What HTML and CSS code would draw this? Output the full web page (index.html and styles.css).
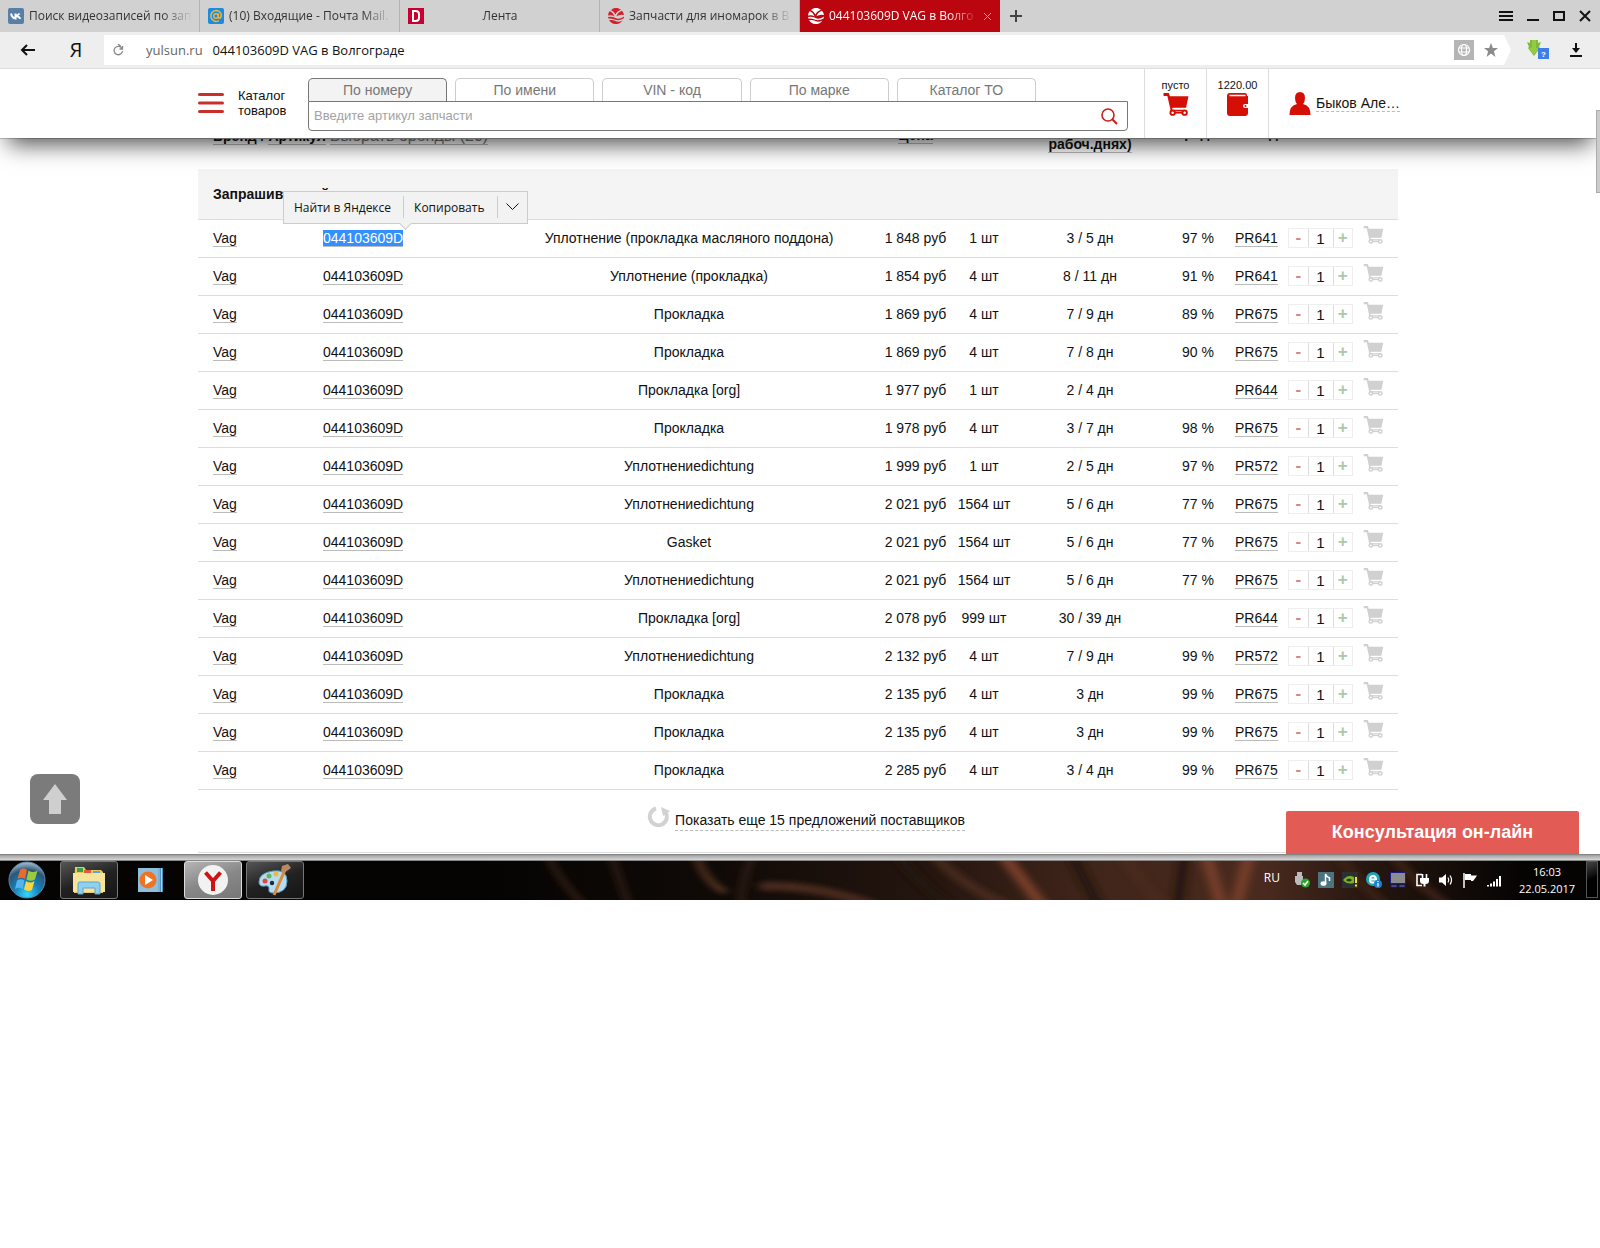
FILE: index.html
```html
<!DOCTYPE html>
<html lang="ru">
<head>
<meta charset="utf-8">
<meta name="viewport" content="width=device-width, initial-scale=1">
<title>044103609D VAG в Волгограде</title>
<link rel="stylesheet" href="styles.css">
</head>
<body>
<svg class="sprite" aria-hidden="true">
  <symbol id="cart" viewBox="0 0 26 24">
    <path d="M0 0h5.500l1.200 3.500H26l-2.500 12H9.500l-.8 2H21v1.500H7.500L7 16.500 4 3H0z"/>
    <g fill="none" stroke="currentColor" stroke-width="2"><circle cx="9.500" cy="20.500" r="2.300"/><circle cx="22" cy="20.500" r="2.300"/><path d="M11 20.500h9"/></g>
  </symbol>
  <symbol id="globe-logo" viewBox="0 0 16 16">
    <path d="M3 1.900A8 8 0 0 1 13 1.800Q8.500 3.500 7.600 6.500 5.500 3.300 3 1.900zM14 2.700A8 8 0 0 1 16 7Q11.500 6 8.500 8.300 9.500 4.600 14 2.700zM1.700 3A8 8 0 0 0 0 7.500Q4 6.500 6.800 8.500 5.500 4.800 1.700 3zM0 9q4-1 7.500 1.100T16 8.500l-.4 2Q11 13 7.300 11.700T.3 10.600zM1 12.200q3.500-.8 6.500.8t7-.5A8 8 0 0 1 1 12.200z"/>
  </symbol>
</svg>

<div class="tabstrip">
  <nav class="tabs" aria-label="Вкладки">
    <a class="tab" href="#">
      <svg class="fav" viewBox="0 0 16 16"><rect width="16" height="16" rx="2" fill="#5a7fa6"/><path d="M3 5.500q1 4.500 4.500 5V5.500M7.500 8q2.500-.5 4-2.500M8 8q3 .5 4.500 2.800" fill="none" stroke="#fff" stroke-width="2"/></svg>
      <span class="tab-text">Поиск видеозаписей по зап</span>
    </a>
    <a class="tab" href="#">
      <svg class="fav" viewBox="0 0 16 16"><rect width="16" height="16" rx="2" fill="#168de2"/><circle cx="8" cy="8" r="2.300" fill="none" stroke="#f3b23a" stroke-width="1.500"/><path d="M10.400 5.500v3.500q.3 1.500 1.700 1Q13.800 9 13 5.800 11.600 2.400 8 2.400A5.500 5.500 0 1 0 11 12.700" fill="none" stroke="#f3b23a" stroke-width="1.500"/></svg>
      <span class="tab-text">(10) Входящие - Почта Mail.</span>
    </a>
    <a class="tab" href="#">
      <svg class="fav" viewBox="0 0 16 16"><path fill="#c8002f" d="M0 0h16v16H0z"/><path d="M5 3h2.500q3.500 0 3.500 3v4q0 3-3.500 3H5z" fill="none" stroke="#fff" stroke-width="2"/></svg>
      <span class="tab-text centered">Лента</span>
    </a>
    <a class="tab" href="#">
      <svg class="fav red"><use href="#globe-logo"/></svg>
      <span class="tab-text">Запчасти для иномарок в В</span>
    </a>
    <a class="tab active" href="#" aria-current="page">
      <svg class="fav"><use href="#globe-logo"/></svg>
      <span class="tab-text">044103609D VAG в Волго</span>
      <svg class="tab-close" viewBox="0 0 9 9"><path d="M1 1l7 7M8 1L1 8" stroke="#e99" fill="none"/></svg>
    </a>
  </nav>
  <button class="icon-btn" aria-label="Новая вкладка"><svg width="12" height="12" viewBox="0 0 12 12"><path d="M6 0v12M0 6h12" stroke="#444" stroke-width="2"/></svg></button>
  <div class="window-controls">
    <button class="icon-btn" aria-label="Меню"><svg width="14" height="12" viewBox="0 0 14 12"><path d="M0 2h14M0 6h14M0 10h14" stroke="#111" stroke-width="2"/></svg></button>
    <button class="icon-btn" aria-label="Свернуть"><svg width="12" height="12" viewBox="0 0 12 12"><path d="M0 10h12" stroke="#111" stroke-width="2"/></svg></button>
    <button class="icon-btn" aria-label="Развернуть"><svg width="12" height="12" viewBox="0 0 12 12"><path d="M1 2h10v8H1z" stroke="#111" stroke-width="2" fill="none"/></svg></button>
    <button class="icon-btn" aria-label="Закрыть"><svg width="12" height="12" viewBox="0 0 12 12"><path d="M1 1l10 10M11 1L1 11" stroke="#111" stroke-width="2"/></svg></button>
  </div>
</div>

<div class="toolbar">
  <button class="icon-btn" aria-label="Назад"><svg width="16" height="12" viewBox="0 0 16 12"><path d="M15 6H2M7 1L2 6l5 5" stroke="#111" stroke-width="2" fill="none"/></svg></button>
  <a class="ya" href="#">Я</a>
  <div class="omnibox">
    <button class="icon-btn" aria-label="Обновить"><svg width="11" height="12" viewBox="0 0 11 12"><path d="M9 4.500A4.200 4.200 0 1 0 9.500 7M9.500 2v3H6.500M5 0l3 2.500" stroke="#888" stroke-width="1.300" fill="none"/></svg></button>
    <span class="host">yulsun.ru</span>
    <span class="title">044103609D VAG в Волгограде</span>
    <div class="omni-icons">
      <svg width="20" height="20" viewBox="0 0 20 20"><path fill="#b5b5b5" d="M0 0h20v20H0z"/><g fill="none" stroke="#fff" stroke-width="1.200"><circle cx="10" cy="10" r="5.500"/><ellipse cx="10" cy="10" rx="2.500" ry="5.500"/><path d="M5 8h10M5 12h10"/></g></svg>
      <svg width="14" height="14" viewBox="0 0 14 14"><path fill="#8b8b8b" d="M7 0l1.900 5H14l-4.100 3.200L11.400 14 7 10.500 2.600 14l1.500-5.800L0 5h5.100z"/></svg>
    </div>
  </div>
  <svg class="ext" width="24" height="20" viewBox="0 0 24 20"><path d="M1 2l3 1V0h8v3l3-1-2 5 1 1-6 8-6-8 1-1z" fill="#7fb83a"/><path d="M6 0h4v8h3l-5 7-5-7h3z" fill="#93cc43"/><rect x="12" y="8" width="11" height="11" fill="#3f7ee8"/><text x="15" y="17" class="ext-mark">?</text></svg>
  <button class="icon-btn" aria-label="Загрузки"><svg width="12" height="14" viewBox="0 0 12 14"><path d="M0 13h12M6 0v7" stroke="#111" stroke-width="2"/><path d="M2 5h8L6 10z" fill="#111"/></svg></button>
</div>

<div class="page">
  <header class="site-header">
    <div class="header-inner">
      <a class="catalog" href="#">
        <svg width="26" height="22" viewBox="0 0 26 22"><path d="M1.500 2.500h23M1.500 11h23M1.500 19.500h23" stroke="#c9302c" stroke-width="3" stroke-linecap="round"/></svg>
        <span>Каталог<br>товаров</span>
      </a>
      <form class="search">
        <div class="search-tabs">
          <button type="button" class="search-tab on">По номеру</button>
          <button type="button" class="search-tab">По имени</button>
          <button type="button" class="search-tab">VIN - код</button>
          <button type="button" class="search-tab">По марке</button>
          <button type="button" class="search-tab">Каталог ТО</button>
        </div>
        <div class="search-box">
          <input type="text" placeholder="Введите артикул запчасти" aria-label="Введите артикул запчасти">
          <button class="icon-btn" type="button" aria-label="Найти"><svg width="17" height="17" viewBox="0 0 17 17"><circle cx="7" cy="7" r="6" fill="none" stroke="#c9201a" stroke-width="1.600"/><path d="M11.300 11.300L16 16" stroke="#c9201a" stroke-width="2"/></svg></button>
        </div>
      </form>
      <a class="head-cell" href="#"><span>пусто</span><svg width="26" height="23"><use href="#cart"/></svg></a>
      <a class="head-cell" href="#"><span>1220.00</span><svg width="22" height="23" viewBox="0 0 22 23"><path d="M3 0h15q2 0 2 3h1v8h-3q-2 0-2 2t2 2h3v5q0 3-3 3H3q-3 0-3-3V3q0-3 3-3z"/><path d="M2.500 2.500h16" stroke="#fff" stroke-width="1.500"/><circle cx="18.500" cy="13" r="1"/></svg></a>
      <a class="user" href="#"><svg width="22" height="23" viewBox="0 0 22 23"><path d="M11 0q5 0 5 6 0 4-2 6 7.500 1.500 7.500 11h-21Q.5 13.500 8 12 6 10 6 6q0-6 5-6z"/></svg><span>Быков Але…</span></a>
    </div>
  </header>

  <main class="content">
    <table class="offers">
      <colgroup><col class="c-brand"><col class="c-art"><col><col class="c-price"><col class="c-qty"><col class="c-days"><col class="c-pct"><col class="c-pr"><col class="c-step"><col class="c-cart"></colgroup>
      <thead>
        <tr>
          <th class="left" colspan="3"><a class="ul" href="#">Бренд</a> / <a class="ul" href="#">Артикул</a> <a class="ul pick" href="#">Выбрать бренды (20)</a></th>
          <th><a class="ul" href="#">Цена</a></th>
          <th></th>
          <th><a class="ul" href="#">Срок (в<br>рабоч.днях)</a></th>
          <th class="plain">Средн.</th>
          <th class="plain supplier">Склад</th>
          <th></th><th></th>
        </tr>
      </thead>
      <tbody>
        <tr class="group"><th class="left" colspan="10">
          <div class="anchor">Запрашиваемый артикул
            <div class="popup"><button>Найти в Яндексе</button><button>Копировать</button><button aria-label="Ещё"><svg width="13" height="8" viewBox="0 0 13 8"><path d="M.5.500l6 6 6-6" fill="none" stroke="#111"/></svg></button></div>
          </div>
        </th></tr>
        <tr><td><a class="ul" href="#">Vag</a></td><td><a class="ul selected" href="#">044103609D</a></td><td>Уплотнение (прокладка масляного поддона)</td><td>1 848 руб</td><td>1 шт</td><td>3 / 5 дн</td><td>97 %</td><td><a class="ul" href="#">PR641</a></td><td><div class="stepper"><button class="minus">-</button><input value="1" aria-label="Количество"><button class="plus">+</button></div></td><td><button class="buy" aria-label="В корзину"><svg><use href="#cart"/></svg></button></td></tr>
        <tr><td><a class="ul" href="#">Vag</a></td><td><a class="ul" href="#">044103609D</a></td><td>Уплотнение (прокладка)</td><td>1 854 руб</td><td>4 шт</td><td>8 / 11 дн</td><td>91 %</td><td><a class="ul" href="#">PR641</a></td><td><div class="stepper"><button class="minus">-</button><input value="1" aria-label="Количество"><button class="plus">+</button></div></td><td><button class="buy" aria-label="В корзину"><svg><use href="#cart"/></svg></button></td></tr>
        <tr><td><a class="ul" href="#">Vag</a></td><td><a class="ul" href="#">044103609D</a></td><td>Прокладка</td><td>1 869 руб</td><td>4 шт</td><td>7 / 9 дн</td><td>89 %</td><td><a class="ul" href="#">PR675</a></td><td><div class="stepper"><button class="minus">-</button><input value="1" aria-label="Количество"><button class="plus">+</button></div></td><td><button class="buy" aria-label="В корзину"><svg><use href="#cart"/></svg></button></td></tr>
        <tr><td><a class="ul" href="#">Vag</a></td><td><a class="ul" href="#">044103609D</a></td><td>Прокладка</td><td>1 869 руб</td><td>4 шт</td><td>7 / 8 дн</td><td>90 %</td><td><a class="ul" href="#">PR675</a></td><td><div class="stepper"><button class="minus">-</button><input value="1" aria-label="Количество"><button class="plus">+</button></div></td><td><button class="buy" aria-label="В корзину"><svg><use href="#cart"/></svg></button></td></tr>
        <tr><td><a class="ul" href="#">Vag</a></td><td><a class="ul" href="#">044103609D</a></td><td>Прокладка [org]</td><td>1 977 руб</td><td>1 шт</td><td>2 / 4 дн</td><td></td><td><a class="ul" href="#">PR644</a></td><td><div class="stepper"><button class="minus">-</button><input value="1" aria-label="Количество"><button class="plus">+</button></div></td><td><button class="buy" aria-label="В корзину"><svg><use href="#cart"/></svg></button></td></tr>
        <tr><td><a class="ul" href="#">Vag</a></td><td><a class="ul" href="#">044103609D</a></td><td>Прокладка</td><td>1 978 руб</td><td>4 шт</td><td>3 / 7 дн</td><td>98 %</td><td><a class="ul" href="#">PR675</a></td><td><div class="stepper"><button class="minus">-</button><input value="1" aria-label="Количество"><button class="plus">+</button></div></td><td><button class="buy" aria-label="В корзину"><svg><use href="#cart"/></svg></button></td></tr>
        <tr><td><a class="ul" href="#">Vag</a></td><td><a class="ul" href="#">044103609D</a></td><td>Уплотнениеdichtung</td><td>1 999 руб</td><td>1 шт</td><td>2 / 5 дн</td><td>97 %</td><td><a class="ul" href="#">PR572</a></td><td><div class="stepper"><button class="minus">-</button><input value="1" aria-label="Количество"><button class="plus">+</button></div></td><td><button class="buy" aria-label="В корзину"><svg><use href="#cart"/></svg></button></td></tr>
        <tr><td><a class="ul" href="#">Vag</a></td><td><a class="ul" href="#">044103609D</a></td><td>Уплотнениеdichtung</td><td>2 021 руб</td><td>1564 шт</td><td>5 / 6 дн</td><td>77 %</td><td><a class="ul" href="#">PR675</a></td><td><div class="stepper"><button class="minus">-</button><input value="1" aria-label="Количество"><button class="plus">+</button></div></td><td><button class="buy" aria-label="В корзину"><svg><use href="#cart"/></svg></button></td></tr>
        <tr><td><a class="ul" href="#">Vag</a></td><td><a class="ul" href="#">044103609D</a></td><td>Gasket</td><td>2 021 руб</td><td>1564 шт</td><td>5 / 6 дн</td><td>77 %</td><td><a class="ul" href="#">PR675</a></td><td><div class="stepper"><button class="minus">-</button><input value="1" aria-label="Количество"><button class="plus">+</button></div></td><td><button class="buy" aria-label="В корзину"><svg><use href="#cart"/></svg></button></td></tr>
        <tr><td><a class="ul" href="#">Vag</a></td><td><a class="ul" href="#">044103609D</a></td><td>Уплотнениеdichtung</td><td>2 021 руб</td><td>1564 шт</td><td>5 / 6 дн</td><td>77 %</td><td><a class="ul" href="#">PR675</a></td><td><div class="stepper"><button class="minus">-</button><input value="1" aria-label="Количество"><button class="plus">+</button></div></td><td><button class="buy" aria-label="В корзину"><svg><use href="#cart"/></svg></button></td></tr>
        <tr><td><a class="ul" href="#">Vag</a></td><td><a class="ul" href="#">044103609D</a></td><td>Прокладка [org]</td><td>2 078 руб</td><td>999 шт</td><td>30 / 39 дн</td><td></td><td><a class="ul" href="#">PR644</a></td><td><div class="stepper"><button class="minus">-</button><input value="1" aria-label="Количество"><button class="plus">+</button></div></td><td><button class="buy" aria-label="В корзину"><svg><use href="#cart"/></svg></button></td></tr>
        <tr><td><a class="ul" href="#">Vag</a></td><td><a class="ul" href="#">044103609D</a></td><td>Уплотнениеdichtung</td><td>2 132 руб</td><td>4 шт</td><td>7 / 9 дн</td><td>99 %</td><td><a class="ul" href="#">PR572</a></td><td><div class="stepper"><button class="minus">-</button><input value="1" aria-label="Количество"><button class="plus">+</button></div></td><td><button class="buy" aria-label="В корзину"><svg><use href="#cart"/></svg></button></td></tr>
        <tr><td><a class="ul" href="#">Vag</a></td><td><a class="ul" href="#">044103609D</a></td><td>Прокладка</td><td>2 135 руб</td><td>4 шт</td><td>3 дн</td><td>99 %</td><td><a class="ul" href="#">PR675</a></td><td><div class="stepper"><button class="minus">-</button><input value="1" aria-label="Количество"><button class="plus">+</button></div></td><td><button class="buy" aria-label="В корзину"><svg><use href="#cart"/></svg></button></td></tr>
        <tr><td><a class="ul" href="#">Vag</a></td><td><a class="ul" href="#">044103609D</a></td><td>Прокладка</td><td>2 135 руб</td><td>4 шт</td><td>3 дн</td><td>99 %</td><td><a class="ul" href="#">PR675</a></td><td><div class="stepper"><button class="minus">-</button><input value="1" aria-label="Количество"><button class="plus">+</button></div></td><td><button class="buy" aria-label="В корзину"><svg><use href="#cart"/></svg></button></td></tr>
        <tr><td><a class="ul" href="#">Vag</a></td><td><a class="ul" href="#">044103609D</a></td><td>Прокладка</td><td>2 285 руб</td><td>4 шт</td><td>3 / 4 дн</td><td>99 %</td><td><a class="ul" href="#">PR675</a></td><td><div class="stepper"><button class="minus">-</button><input value="1" aria-label="Количество"><button class="plus">+</button></div></td><td><button class="buy" aria-label="В корзину"><svg><use href="#cart"/></svg></button></td></tr>
      </tbody>
    </table>
    <div class="more">
      <svg width="24" height="22" viewBox="0 0 24 22"><path d="M9 2.500A8.500 8.500 0 1 0 19 7" fill="none" stroke="#d2d2d2" stroke-width="4"/><path d="M14 1l9 4-7 5z" fill="#d2d2d2"/></svg>
      <a href="#">Показать еще 15 предложений поставщиков</a>
    </div>
  </main>

  <button class="to-top" aria-label="Наверх"><svg width="24" height="30" viewBox="0 0 24 30"><path d="M12 0l12 16h-6v14H6V16H0z" fill="#cfcfcf"/></svg></button>
  <button class="chat">Консультация он-лайн</button>
  <div class="scroll-thumb"></div>
</div>

<div class="glass"></div>
<footer class="taskbar">
  <svg class="wallpaper" viewBox="0 0 1600 40" preserveAspectRatio="none" aria-hidden="true">
    <defs>
      <linearGradient id="wall"><stop offset=".3" stop-color="#050403"/><stop offset=".45" stop-color="#100a07"/><stop offset=".58" stop-color="#24150f"/><stop offset=".68" stop-color="#40251a"/><stop offset=".79" stop-color="#4a2a1e"/><stop offset=".86" stop-color="#24150f"/><stop offset=".95" stop-color="#060403"/></linearGradient>
      <filter id="soft" filterUnits="userSpaceOnUse" x="0" y="-20" width="1600" height="80"><feGaussianBlur stdDeviation="5 3"/></filter>
    </defs>
    <path fill="url(#wall)" d="M0 0h1600v40H0z"/>
    <g fill="none" filter="url(#soft)">
      <path d="M545-10q20 40 45 60M610-10l20 60M755-10q-15 30-14 60" stroke="#3a2318" stroke-width="5"/>
      <path d="M695-10q8 30 30 42" stroke="#6a4028" stroke-width="5"/>
      <path d="M760 26q60-2 120 22M930-10q30 35 85 60M1120-10q20 30 45 60" stroke="#4a2b1e" stroke-width="9"/>
      <path d="M1000-10q25 32 45 60M1205-10l18 60M1250-10l-15 60" stroke="#7a412c" stroke-width="11"/>
      <path d="M895-10q20 30 60 60M1070-10l30 60M1185-10l-8 60" stroke="#24140e" stroke-width="10"/>
      <path d="M1335-10q25 35 55 60M1390-10q25 35 65 60" stroke="#3c2318" stroke-width="8"/>
    </g>
  </svg>
  <button class="start" aria-label="Пуск"><svg width="38" height="38" viewBox="0 0 38 38">
    <defs><radialGradient id="orb" cx=".5" cy=".9" r=".9"><stop offset="0" stop-color="#35d6ff"/><stop offset=".4" stop-color="#1580b8"/><stop offset=".75" stop-color="#2c5678"/><stop offset="1" stop-color="#a9c4d8"/></radialGradient></defs>
    <circle cx="19" cy="19" r="18" fill="url(#orb)" stroke="#5b87a5"/>
    <path d="M12 9q4-3 7 0l-2 9q-4-2.500-7.500 0z" fill="#ee6a2c"/><path d="M20.500 9.500q4 3 9 0l-2.500 9q-4 2.500-8.500 0z" fill="#9bcb3c"/><path d="M9 19.500q4-2.500 7.500 0l-2 8.500q-3-2.500-7.500 0z" fill="#53b4ee"/><path d="M18 20q4 3 8.500 0l-2.500 9q-4 2-8-.5z" fill="#fcd43f"/>
  </svg></button>
  <div class="tasks">
    <button class="task open" aria-label="Проводник"><svg width="34" height="30" viewBox="0 0 34 30"><path d="M3 2h9l2 3h15l2 2v21H2z" fill="#e8c765"/><path d="M5 3h6v4H5z" fill="#35a343"/><path d="M12 5h7v3h-7z" fill="#e45b3a"/><path d="M21 6h7v3h-7z" fill="#5aa6e0"/><path d="M1 8h32v19H1z" fill="#f6e49a"/><path d="M6 29V19q0-2 2-2h18q2 0 2 2v10h-5v-6H11v6z" fill="#8fd0ee" stroke="#5aa6d0"/></svg></button>
    <button class="task" aria-label="Проигрыватель"><svg width="28" height="26" viewBox="0 0 28 26"><path d="M5 1h21v24H5z" fill="#4d90bb"/><path d="M22 1v24M24.500 1v24" stroke="#a9d5ef"/><path d="M1 1h20v24H1z" fill="#8fbfdc"/><circle cx="11" cy="13" r="8.500" fill="#ee7423"/><path d="M8 8l8 5-8 5z" fill="#fff"/></svg></button>
    <button class="task current" aria-label="Яндекс.Браузер"><svg width="30" height="30" viewBox="0 0 30 30"><circle cx="15" cy="15" r="15" fill="#f2f2f2"/><path d="M7.500 7.500L15 16l7.500-8.500M15 15v11" fill="none" stroke="#cf1414" stroke-width="4"/></svg></button>
    <button class="task open" aria-label="Paint"><svg width="34" height="32" viewBox="0 0 34 32"><path d="M15 7Q29 5 29 17T15 29q-5 0-4-4 0-4-4-3-6 1-6-4Q1 9 15 7z" fill="#b5dcf0" stroke="#5a99bd"/><circle cx="7" cy="17" r="2.500" fill="#e0483b"/><circle cx="11" cy="12" r="2.500" fill="#5cb85c"/><circle cx="18" cy="10" r="2.500" fill="#f0b93a"/><circle cx="14" cy="19" r="2.200" fill="#182c3c"/><path d="M27 6L16 31" stroke="#dc8b34" stroke-width="3"/><path d="M24 2l6-2 3 4-7 5-3-2z" fill="#b98a62"/></svg></button>
  </div>
  <span class="lang">RU</span>
  <div class="tray">
    <svg viewBox="0 0 16 16"><path d="M3 0h5v4H3zM1 4h8v6l-2 3H3l-2-3z" fill="#bbb"/><circle cx="11.500" cy="11" r="4.500" fill="#2ea52e"/><path d="M9 11l2 2 3-4" fill="none" stroke="#fff" stroke-width="1.500"/></svg>
    <svg viewBox="0 0 16 16"><path fill="#4b7480" d="M0 0h16v16H0z"/><path d="M7.500 11V2q1 3 4 4v3" fill="none" stroke="#fff" stroke-width="1.500"/><ellipse cx="5.500" cy="11.500" rx="3" ry="2.300" fill="#fff"/></svg>
    <svg viewBox="0 0 16 16"><path fill="#2b3035" d="M0 0h16v16H0z"/><path d="M1 8q5-6 11-3v6q-7 2-11-3zm3 0q3 3 6 0-3-3-6 0z" fill="#7ab51d" fill-rule="evenodd"/><path d="M14 5v6M14 12.500v2" stroke="#f4e21c" stroke-width="2"/></svg>
    <svg viewBox="0 0 16 16"><circle cx="7" cy="7" r="7" fill="#20a5b8"/><path d="M4 7.500h6Q10 4 7 4T4 7.500 7 10.500h2.500" fill="none" stroke="#fff" stroke-width="2"/><circle cx="12" cy="12" r="4" fill="#1e7fd6"/><path d="M12 11v3.500M12 9v1" stroke="#fff" stroke-width="1.300"/></svg>
    <svg viewBox="0 0 16 16"><path d="M.5.500h15v11H.5z" fill="#8c8c8c" stroke="#1a1a8a"/><path d="M1 13h6v2H1zM9 13h6v2H9z" fill="#777" stroke="#1a1a8a"/></svg>
    <svg viewBox="0 0 16 16"><path d="M8 2.500H3v11h5" fill="none" stroke="#fff" stroke-width="1.600"/><path d="M6 6h9v3q0 3-3.500 3v2.500h-2V12Q6 12 6 9z" fill="#fff"/><path d="M8.500 2v4M12.500 2v4" stroke="#fff" stroke-width="1.600"/></svg>
    <svg viewBox="0 0 16 16"><path d="M1 5.500h3L8 2v12l-4-3.500H1z" fill="#fff"/><path d="M10 5.500q1.500 2.500 0 5M12 3.500q3 4.500 0 9" fill="none" stroke="#fff" stroke-width="1.200"/></svg>
    <svg viewBox="0 0 16 16"><path d="M2 1v15" stroke="#fff" stroke-width="1.500"/><path d="M3 2h6v1.500h6l-2 3-2 2.500H9V8H3z" fill="#fff"/></svg>
    <svg viewBox="0 0 16 16"><path d="M2 13v1.500M5 11.500v3M8 9.500v5M11 7v7.500M14 4v10.500" stroke="#fff" stroke-width="2"/></svg>
  </div>
  <time class="clock" datetime="2017-05-22T16:03">16:03<br>22.05.2017</time>
  <button class="show-desktop" aria-label="Свернуть все окна"></button>
</footer>
</body>
</html>
```
FILE: styles.css
```css
* { box-sizing: border-box; }

body {
  margin: 0;
  background: #fff;
  color: #111;
  font: 14px/18px "Liberation Sans", Arial, sans-serif;
}

a { color: inherit; text-decoration: none; }
button, input { font: inherit; color: inherit; margin: 0; padding: 0; border: 0; background: none; }
svg { display: block; flex: none; }
.sprite { position: absolute; width: 0; height: 0; }
.icon-btn { display: flex; align-items: center; justify-content: center; flex: none; }

/* Browser tabs */
.tabstrip {
  display: flex;
  align-items: center;
  height: 32px;
  padding-right: 9px;
  background: #d1d1d1;
  font: 12px/18px "Open Sans", "Noto Sans", sans-serif;
  color: #333;
}
.tabs { display: flex; flex: 0 1 1000px; min-width: 0; height: 32px; margin-right: 10px; }
.tab {
  display: flex;
  align-items: center;
  flex: 1 1 0;
  min-width: 0;
  gap: 5px;
  padding: 0 7px 0 8px;
  border-right: 1px solid #b4b4b4;
}
.tab.active { background: #bb0610; color: #fff; border-color: #bb0610; }
.fav { width: 16px; height: 16px; fill: currentColor; }
.fav.red { color: #d5202c; }
.tab-text {
  flex: 1;
  overflow: hidden;
  white-space: nowrap;
  -webkit-mask-image: linear-gradient(to left, transparent, #000 30px);
  mask-image: linear-gradient(to left, transparent, #000 30px);
}
.tab-text.centered { padding-right: 21px; text-align: center; }
.tab-close { width: 9px; height: 9px; }
.window-controls { display: flex; gap: 14px; margin-left: auto; }

/* Address bar */
.toolbar {
  display: flex;
  align-items: center;
  height: 37px;
  padding: 0 18px 0 20px;
  background: #eee;
  border-bottom: 1px solid #ddd;
  font: 14px/18px "Open Sans", "Noto Sans", sans-serif;
}
.ya { width: 40px; margin-left: 20px; text-align: center; font: 20px/24px "Open Sans", sans-serif; }
.omnibox {
  display: flex;
  align-items: center;
  flex: 1;
  height: 30px;
  margin: 0 15px 0 8px;
  padding: 0 13px 0 9px;
  background: #fff;
  clip-path: polygon(0 0, calc(100% - 7px) 0, 100% 50%, calc(100% - 7px) 100%, 0 100%);
  font-size: 13px;
}
.host { margin-left: 22px; color: #666; }
.title { margin-left: 10px; }
.omni-icons { display: flex; align-items: center; gap: 10px; margin-left: auto; }
.ext { margin-right: 20px; }
.ext-mark { font: bold 8px "Liberation Sans", sans-serif; fill: #fff; }

/* Site header */
.page { position: relative; overflow: hidden; padding-right: 4px; }
.site-header {
  position: relative;
  z-index: 2;
  height: 70px;
  margin-right: -4px;
  padding-right: 4px;
  background: #fff;
  border-bottom: 1px solid #ccc;
}
.site-header::before {
  content: "";
  position: absolute;
  z-index: -1;
  inset: 0 10px;
  box-shadow: 0 4px 22px 2px rgba(0, 0, 0, .7);
}
.site-header::after {
  content: "";
  position: absolute;
  z-index: -1;
  inset: 0;
  background: #fff;
}
.header-inner { display: flex; max-width: 1200px; height: 69px; margin: 0 auto; }
.catalog { display: flex; align-items: center; gap: 14px; width: 110px; padding-bottom: 2px; font-size: 13px; line-height: 15px; }
.search { display: flex; flex-direction: column; flex: 1; min-width: 0; padding-top: 9px; margin-right: 16px; }
.search-tabs { display: grid; grid-template-columns: repeat(5, 1fr); gap: 8px; max-width: 728px; height: 23px; }
.search-tab {
  border: 1px solid #ccc;
  border-bottom: 0;
  border-radius: 5px 5px 0 0;
  color: #777;
}
.search-tab.on { background: #f3f3f3; border-color: #777; }
.search-box {
  display: flex;
  align-items: center;
  height: 30px;
  padding: 0 9px 0 5px;
  border: 1px solid #777;
  border-radius: 0 0 4px 4px;
}
.search-box input { flex: 1; min-width: 0; outline: 0; font-size: 13px; }
.search-box input::placeholder { color: #a2a2a2; opacity: 1; }
.head-cell {
  display: flex;
  flex-direction: column;
  align-items: center;
  width: 62px;
  padding-top: 8px;
  border-left: 1px solid #ddd;
  font-size: 11px;
  line-height: 16px;
}
.head-cell svg, .user svg { fill: #d50f06; color: #d50f06; }
.user {
  display: flex;
  align-items: center;
  gap: 5px;
  width: 130px;
  padding-left: 20px;
  border-left: 1px solid #ddd;
}
.user span { border-bottom: 1px dashed #bbb; line-height: 16px; white-space: nowrap; }

/* Offers */
.content { max-width: 1200px; margin: -22px auto 0; }
.offers { width: 100%; table-layout: fixed; border-collapse: collapse; }
.c-brand { width: 110px; }
.c-art { width: 191px; }
.c-price { width: 73px; }
.c-qty { width: 64px; }
.c-days { width: 148px; }
.c-pct { width: 68px; }
.c-pr { width: 56px; }
.c-step { width: 65px; }
.c-cart { width: 45px; }
.offers th, .offers td { padding: 0; text-align: center; white-space: nowrap; }
.offers thead th { height: 52px; padding-bottom: 16px; }
.offers thead .left { padding-bottom: 14px; }
.offers thead .plain { padding-bottom: 20px; }
.offers .left { text-align: left; padding-left: 15px; }
.offers thead .supplier { text-align: left; padding-left: 3px; }
.ul { border-bottom: 1px solid #bbb; }
.pick { color: #777; font-size: 16px; font-weight: normal; }
.group th { height: 50px; background: #f4f4f4; }
.offers tbody tr { border-bottom: 1px solid #ddd; }
.offers td { height: 38px; }
.offers td:nth-child(1), .offers td:nth-child(2) { text-align: left; padding-left: 15px; }
.offers td:nth-child(8) { text-align: left; padding-left: 3px; }
.selected { background: #3390ff; color: #fff; }

.stepper { display: flex; width: 65px; height: 20px; border: 1px solid #eee; font-size: 15px; }
.stepper button { flex: 1; font-size: 17px; line-height: 18px; font-weight: bold; }
.stepper input { width: 26px; padding-top: 1px; border: 1px solid #ddd; border-width: 0 1px; text-align: center; }
.minus { color: #d98880; }
.plus { color: #a9c9a9; }
.buy { display: block; margin: 0 0 6px 10px; color: #d0d0d0; fill: #d0d0d0; }
.buy svg { width: 21px; height: 18px; }

/* Text selection menu */
.anchor { position: relative; }
.popup {
  position: absolute;
  z-index: 1;
  left: 70px;
  top: 6px;
  display: flex;
  align-items: center;
  height: 33px;
  background: #f2f2f2;
  border: 1px solid #ccc;
  font: 12px/20px "Open Sans", "Noto Sans", sans-serif;
}
.popup::after {
  content: "";
  position: absolute;
  left: 117px;
  bottom: -5px;
  width: 8px;
  height: 8px;
  background: #f2f2f2;
  border: 1px solid #ccc;
  border-width: 0 1px 1px 0;
  transform: rotate(45deg);
}
.popup button { height: 22px; padding: 1px 12px 0 10px; }
.popup button + button { border-left: 1px solid #ccc; }
.popup button:last-child { padding: 0 8px; }

.more { display: flex; justify-content: center; gap: 4px; height: 63px; padding: 16px 0 0 16px; border-bottom: 1px solid #ddd; margin-bottom: 1px; }
.more a { height: 25px; padding-top: 5px; border-bottom: 1px dashed #bbb; }

/* Floating controls */
.to-top {
  position: absolute;
  left: 30px;
  bottom: 30px;
  display: flex;
  align-items: center;
  justify-content: center;
  width: 50px;
  height: 50px;
  border-radius: 8px;
  background: #7b7b7b;
}
.chat {
  position: absolute;
  right: 21px;
  bottom: 0;
  width: 293px;
  height: 43px;
  border-radius: 2px 2px 0 0;
  background: #e25b54;
  color: #fff;
  font-size: 18px;
  font-weight: bold;
}
.scroll-thumb { position: absolute; z-index: 3; right: 0; top: 41px; width: 4px; height: 83px; background: #ccc; border: 1px solid #aaa; border-right: 0; }

/* Windows taskbar */
.glass { height: 6px; background: linear-gradient(#777, #aaa 30%, #d6d6d6); }
.taskbar {
  position: relative;
  display: flex;
  align-items: center;
  height: 40px;
  padding: 0 2px 0 8px;
  background: #050403;
  color: #fff;
  font: 12px/17px "Open Sans", "Noto Sans", sans-serif;
}
.taskbar > * { position: relative; }
.taskbar > .wallpaper { position: absolute; left: 0; top: 0; width: 100%; height: 100%; border-top: 1px solid #888; }
.start { margin-right: 14px; }
.tasks { display: flex; gap: 4px; }
.task { display: flex; align-items: center; justify-content: center; width: 58px; height: 38px; border: 1px solid transparent; border-radius: 3px; }
.task.open { border-color: #777; background: linear-gradient(160deg, #555, #222 50%, #151515); }
.task.current { border-color: #ddd; background: linear-gradient(160deg, #b5b5b5, #888 50%, #777); }
.lang { margin-left: auto; margin-right: 14px; padding-bottom: 4px; }
.tray { display: flex; gap: 8px; margin-right: 6px; }
.tray svg { width: 16px; height: 16px; }
.clock { width: 78px; font-size: 11px; text-align: center; }
.show-desktop { width: 12px; height: 37px; border: 1px solid #555; background: linear-gradient(160deg, #444, #000 50%); }
```
